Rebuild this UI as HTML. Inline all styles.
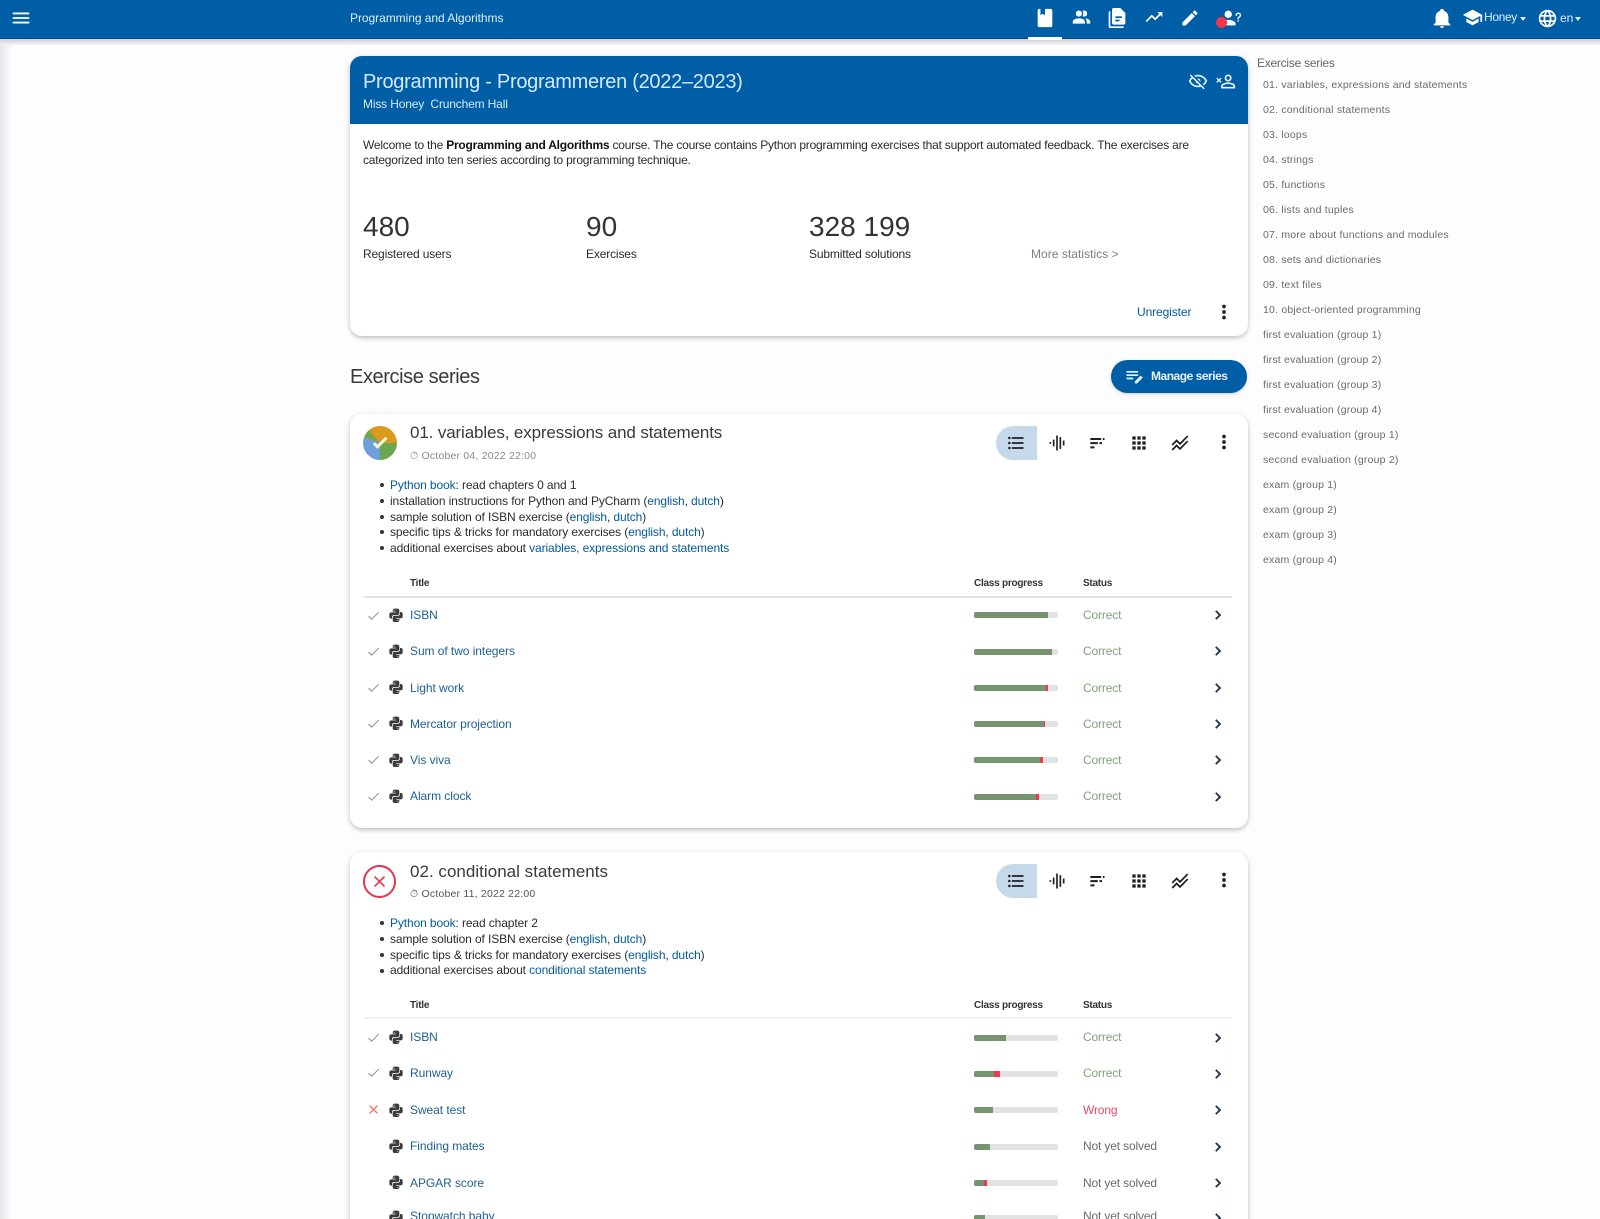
<!DOCTYPE html>
<html><head><meta charset="utf-8"><title>Programming and Algorithms</title>
<style>
*{box-sizing:border-box}
html,body{margin:0;padding:0;width:1600px;height:1219px;overflow:hidden}
body{background:#fdfcff;font-family:"Liberation Sans",sans-serif;color:#1c1b1f}
#w{position:relative;width:1600px;height:1219px;overflow:hidden;background:#fdfcff}
.t{position:absolute;white-space:nowrap;line-height:16px;font-size:12px}
.ic{position:absolute;fill:currentColor}
a{color:#005a9c;text-decoration:none}
.card{position:absolute;left:350px;width:898px;background:#fff;border-radius:12px;box-shadow:0 2px 4px rgba(0,0,0,.2),0 1px 8px rgba(0,0,0,.06)}
.bar{position:absolute;left:974px;width:84px;height:6px;margin-top:-1px;background:#e2e2e4;border-radius:2px;overflow:hidden}
.bar i{position:absolute;top:0;height:6px;display:block}
.g{background:#769470}.r{background:#ee3a50}
.hd{font-weight:bold;font-size:10px;color:#333;letter-spacing:-.25px}
.nm{color:#1d5f96;letter-spacing:-.06px}
.ok{color:#85a07e;letter-spacing:-.15px}.no{color:#e8495c;letter-spacing:-.15px}.ny{color:#6b6b70;letter-spacing:-.15px}
.sd{color:#6b6b70;font-size:10.5px;letter-spacing:.2px}
.li{color:#2b2b2f;letter-spacing:-.11px}
.st{color:#2b2b2f;letter-spacing:-.15px}
.bn{font-size:28px;line-height:34px;color:#333}
</style></head><body><div id="w">
<svg width="0" height="0" style="position:absolute"><defs>
<symbol id="py" viewBox="0 0 24 24"><path d="M19.14,7.5A2.86,2.86 0 0,1 22,10.36V14.14A2.86,2.86 0 0,1 19.14,17H12C12,17.39 12.32,17.96 12.71,17.96H17V19.64A2.86,2.86 0 0,1 14.14,22.5H9.86A2.86,2.86 0 0,1 7,19.64V15.89C7,14.31 8.28,13.04 9.86,13.04H15.11C16.69,13.04 17.96,11.76 17.96,10.18V7.5H19.14M14.86,19.29C14.46,19.29 14.14,19.59 14.14,20.18C14.14,20.77 14.46,20.89 14.86,20.89A0.71,0.71 0 0,0 15.57,20.18C15.57,19.59 15.25,19.29 14.86,19.29M4.86,17.5C3.28,17.5 2,16.22 2,14.64V10.86C2,9.28 3.28,8 4.86,8H12C12,7.61 11.68,7.04 11.29,7.04H7V5.36C7,3.78 8.28,2.5 9.86,2.5H14.14C15.72,2.5 17,3.78 17,5.36V9.11C17,10.69 15.72,11.96 14.14,11.96H8.89C7.31,11.96 6.04,13.24 6.04,14.82V17.5H4.86M9.14,5.71C9.54,5.71 9.86,5.41 9.86,4.82C9.86,4.23 9.54,4.11 9.14,4.11C8.75,4.11 8.43,4.23 8.43,4.82C8.43,5.41 8.75,5.71 9.14,5.71Z"/></symbol>
<symbol id="chev" viewBox="0 0 24 24"><path d="M8.2,16.6L12.8,12L8.2,7.400L10,5.600L16.400,12L10,18.400Z"/></symbol>
<symbol id="chk" viewBox="0 0 24 24"><path d="M21,7L9,19L3.5,13.5L4.6,12.4L9,16.8L19.9,5.9L21,7Z"/></symbol>
<symbol id="dots" viewBox="0 0 24 24"><path d="M12,16A2,2 0 0,1 14,18A2,2 0 0,1 12,20A2,2 0 0,1 10,18A2,2 0 0,1 12,16M12,10A2,2 0 0,1 14,12A2,2 0 0,1 12,14A2,2 0 0,1 10,12A2,2 0 0,1 12,10M12,4A2,2 0 0,1 14,6A2,2 0 0,1 12,8A2,2 0 0,1 10,6A2,2 0 0,1 12,4Z"/></symbol>
<symbol id="list" viewBox="0 0 24 24"><path d="M7,5H21V7H7V5M7,13V11H21V13H7M4,4.5A1.5,1.5 0 0,1 5.5,6A1.5,1.5 0 0,1 4,7.5A1.5,1.5 0 0,1 2.5,6A1.5,1.5 0 0,1 4,4.5M4,10.5A1.5,1.5 0 0,1 5.5,12A1.5,1.5 0 0,1 4,13.5A1.5,1.5 0 0,1 2.5,12A1.5,1.5 0 0,1 4,10.5M7,19V17H21V19H7M4,16.5A1.5,1.5 0 0,1 5.5,18A1.5,1.5 0 0,1 4,19.5A1.5,1.5 0 0,1 2.5,18A1.5,1.5 0 0,1 4,16.5Z"/></symbol>
<symbol id="wave" viewBox="0 0 24 24"><path d="M3 11h2v2H3zM7 8h2v8H7zM11 3h2v18h-2zM15 5h2v14h-2zM19 9h2v6h-2z"/></symbol>
<symbol id="sort" viewBox="0 0 24 24"><path d="M4 6h13v2.4H4zM19 6h2v2.4h-2zM4 11h9v2.4H4zM15 11h3v2.4h-3zM4 16h5v2.400H4z"/></symbol>
<symbol id="grid" viewBox="0 0 24 24"><path d="M4 4h4v4H4zM10 4h4v4h-4zM16 4h4v4h-4zM4 10h4v4H4zM10 10h4v4h-4zM16 10h4v4h-4zM4 16h4v4H4zM10 16h4v4h-4zM16 16h4v4h-4z"/></symbol>
<symbol id="multi" viewBox="0 0 24 24"><path d="M2 13.5l6-6 4 4L20.5 3 22 4.4 12 14.500l-4-4-4.600 4.600zM2 19.5l6-6 4 4L20.5 9 22 10.400 12 20.500l-4-4-4.600 4.600z"/></symbol>
</defs></svg>

<!-- page shading -->
<div style="position:absolute;left:0;top:39px;width:12px;height:1180px;background:linear-gradient(90deg,#e6e6ea,#fdfcff)"></div>
<div style="position:absolute;left:0;top:39px;width:1600px;height:6px;background:linear-gradient(#cfcfd3,#f3f3f6)"></div>

<!-- navbar -->
<div style="position:absolute;left:0;top:0;width:1600px;height:39px;background:#005ea6;color:#fff;border-bottom:1px solid #004f8c">
<svg class="ic" style="left:10px;top:7px" width="22" height="22" viewBox="0 0 24 24"><path d="M3,6H21V8H3V6M3,11H21V13H3V11M3,16H21V18H3V16Z"/></svg>
<span class="t" style="left:350px;top:10px;font-size:12px;color:#dbeeff;letter-spacing:-.05px">Programming and Algorithms</span>
<svg class="ic" style="left:1034px;top:7px" width="22" height="22" viewBox="0 0 24 24"><path d="M18,22A2,2 0 0,0 20,20V4C20,2.89 19.1,2 18,2H12V9L9.5,7.5L7,9V2H6A2,2 0 0,0 4,4V20A2,2 0 0,0 6,22H18Z"/></svg>
<svg class="ic" style="left:1071px;top:7px" width="21" height="21" viewBox="0 0 24 24"><path d="M16 17V19H2V17S2 13 9 13 16 17 16 17M12.5 7.5A3.5 3.5 0 1 0 9 11A3.5 3.5 0 0 0 12.5 7.5M15.94 13A5.32 5.32 0 0 1 18 17V19H22V17S22 13.37 15.94 13M15 4A3.39 3.39 0 0 0 13.07 4.59A5 5 0 0 1 13.07 10.41A3.39 3.39 0 0 0 15 11A3.5 3.5 0 0 0 15 4Z"/></svg>
<svg class="ic" style="left:1107px;top:8px" width="20" height="20" viewBox="0 0 24 24"><path fill-rule="evenodd" d="M16 0H8C6.9 0 6 .9 6 2V18C6 19.1 6.9 20 8 20H20C21.1 20 22 19.1 22 18V6L16 0M4 4V22H20V24H4C2.9 24 2 23.1 2 22V4H4M10 10V12H18V10H10M10 14V16H15V14H10Z"/></svg>
<svg class="ic" style="left:1144px;top:7px" width="20" height="20" viewBox="0 0 24 24"><path d="M16,6L18.29,8.29L13.41,13.17L9.41,9.17L2,16.59L3.41,18L9.41,12L13.41,16L19.71,9.71L22,12V6H16Z"/></svg>
<svg class="ic" style="left:1180px;top:8px" width="20" height="20" viewBox="0 0 24 24"><path d="M20.71,7.04C21.1,6.65 21.1,6 20.71,5.63L18.37,3.29C18,2.9 17.35,2.9 16.96,3.29L15.12,5.12L18.87,8.87M3,17.25V21H6.75L17.81,9.93L14.06,6.18L3,17.25Z"/></svg>
<svg class="ic" style="left:1220px;top:7px" width="22" height="22" viewBox="0 0 24 24"><path d="M13,8A4,4 0 0,1 9,12A4,4 0 0,1 5,8A4,4 0 0,1 9,4A4,4 0 0,1 13,8M17,18V20H1V18C1,15.79 4.58,14 9,14C13.42,14 17,15.79 17,18M20.5,14.5V16H19V14.5H20.5M18.5,9.5H17V9A3,3 0 0,1 20,6A3,3 0 0,1 23,9C23,9.97 22.5,10.88 21.71,11.41L21.41,11.6C20.84,12 20.5,12.61 20.5,13.25V13.5H19V13.25C19,12.11 19.59,11.05 20.5,10.36L20.9,10.1C21.3,9.9 21.5,9.5 21.5,9A1.5,1.5 0 0,0 20,7.5A1.5,1.5 0 0,0 18.5,9V9.5Z"/></svg>
<div style="position:absolute;left:1216px;top:17px;width:11px;height:11px;border-radius:50%;background:#f0344a"></div>
<div style="position:absolute;left:1028px;top:37px;width:34px;height:3px;background:#fff"></div>
<svg class="ic" style="left:1431px;top:7px" width="22" height="22" viewBox="0 0 24 24"><path d="M21,19V20H3V19L5,17V11C5,7.9 7.03,5.17 10,4.29C10,4.19 10,4.1 10,4A2,2 0 0,1 12,2A2,2 0 0,1 14,4C14,4.1 14,4.19 14,4.29C16.97,5.17 19,7.9 19,11V17L21,19M14,21A2,2 0 0,1 12,23A2,2 0 0,1 10,21"/></svg>
<svg class="ic" style="left:1462px;top:7px" width="21" height="21" viewBox="0 0 24 24"><path d="M12,3L1,9L12,15L21,10.09V17H23V9M5,13.18V17.18L12,21L19,17.18V13.18L12,17L5,13.18Z"/></svg>
<span class="t" style="left:1484px;top:9px;color:#dbeeff;letter-spacing:-.35px">Honey</span>
<div style="position:absolute;left:1520px;top:17px;border:3.5px solid transparent;border-top:4px solid #dbeeff;border-bottom:0"></div>
<svg class="ic" style="left:1537px;top:8px" width="21" height="21" viewBox="0 0 24 24"><path d="M16.36,14C16.44,13.34 16.5,12.68 16.5,12C16.5,11.32 16.44,10.66 16.36,10H19.74C19.9,10.64 20,11.31 20,12C20,12.69 19.9,13.36 19.74,14M14.59,19.56C15.19,18.45 15.65,17.25 15.97,16H18.92C17.96,17.65 16.43,18.93 14.59,19.56M14.34,14H9.66C9.56,13.34 9.5,12.68 9.5,12C9.5,11.32 9.56,10.65 9.66,10H14.34C14.43,10.65 14.5,11.32 14.5,12C14.5,12.68 14.43,13.34 14.34,14M12,19.96C11.17,18.76 10.5,17.43 10.09,16H13.91C13.5,17.43 12.83,18.76 12,19.96M8,8H5.08C6.03,6.34 7.57,5.06 9.4,4.44C8.8,5.55 8.35,6.75 8,8M5.08,16H8C8.35,17.25 8.8,18.45 9.4,19.56C7.57,18.93 6.03,17.65 5.08,16M4.26,14C4.1,13.36 4,12.69 4,12C4,11.31 4.1,10.64 4.26,10H7.64C7.56,10.66 7.5,11.32 7.5,12C7.5,12.68 7.56,13.34 7.64,14M12,4.03C12.83,5.23 13.5,6.57 13.91,8H10.09C10.5,6.57 11.17,5.23 12,4.03M18.92,8H15.97C15.65,6.75 15.19,5.55 14.59,4.44C16.43,5.07 17.96,6.34 18.92,8M12,2C6.47,2 2,6.5 2,12A10,10 0 0,0 12,22A10,10 0 0,0 22,12A10,10 0 0,0 12,2Z"/></svg>
<span class="t" style="left:1560px;top:10px;color:#dbeeff">en</span>
<div style="position:absolute;left:1575px;top:17px;border:3.5px solid transparent;border-top:4px solid #dbeeff;border-bottom:0"></div>
</div>

<!-- course card -->
<div class="card" style="top:56px;height:280px"></div>
<div style="position:absolute;left:350px;top:56px;width:898px;height:68px;background:#005ea6;border-radius:12px 12px 0 0"></div>
<span class="t" style="left:363px;top:69px;font-size:20px;line-height:26px;color:#d5eaff;letter-spacing:-.28px">Programming - Programmeren (2022–2023)</span>
<span class="t" style="left:363px;top:96px;color:#d5eaff;letter-spacing:-.16px">Miss Honey &nbsp;Crunchem Hall</span>
<svg class="ic" style="left:1188px;top:71px;color:#eaf4ff" width="20" height="20" viewBox="0 0 24 24"><path d="M2,5.27L3.28,4L20,20.72L18.73,22L15.65,18.92C14.5,19.3 13.28,19.5 12,19.5C7,19.5 2.73,16.39 1,12C1.69,10.24 2.79,8.69 4.19,7.46L2,5.27M12,9A3,3 0 0,1 15,12C15,12.35 14.94,12.69 14.83,13L11,9.17C11.31,9.06 11.65,9 12,9M12,4.5C17,4.5 21.27,7.61 23,12C22.18,14.08 20.79,15.88 19,17.19L17.58,15.76C18.94,14.82 20.06,13.54 20.82,12C19.17,8.64 15.76,6.5 12,6.5C10.91,6.5 9.84,6.68 8.84,7L7.3,5.47C8.74,4.85 10.33,4.5 12,4.5M3.18,12C4.83,15.36 8.24,17.5 12,17.5C12.69,17.5 13.37,17.43 14,17.29L11.72,15C10.29,14.85 9.15,13.71 9,12.28L5.6,8.87C4.61,9.72 3.78,10.78 3.18,12Z"/></svg>
<svg class="ic" style="left:1215px;top:71px;color:#eaf4ff" width="21" height="21" viewBox="0 0 24 24"><path d="M15 4A4 4 0 0 0 11 8A4 4 0 0 0 15 12A4 4 0 0 0 19 8A4 4 0 0 0 15 4M15 5.9A2.1 2.1 0 0 1 17.1 8A2.1 2.1 0 0 1 15 10.1A2.1 2.1 0 0 1 12.9 8A2.1 2.1 0 0 1 15 5.9M15 13C12.33 13 7 14.33 7 17V20H23V17C23 14.33 17.67 13 15 13M15 14.9C17.97 14.9 21.1 16.36 21.1 17V18.1H8.9V17C8.9 16.36 12 14.9 15 14.9M2.6 7.5L1.5 8.6L3.4 10.5L1.5 12.4L2.6 13.5L4.5 11.6L6.4 13.5L7.5 12.4L5.6 10.5L7.5 8.6L6.4 7.5L4.5 9.4Z"/></svg>
<div class="t" style="left:363px;top:137px;color:#2b2b2f;letter-spacing:-.22px">Welcome to the <b style="color:#111">Programming and Algorithms</b> course. The course contains Python programming exercises that support automated feedback. The exercises are</div>
<div class="t" style="left:363px;top:152px;color:#2b2b2f;letter-spacing:-.22px">categorized into ten series according to programming technique.</div>
<span class="t bn" style="left:363px;top:210px">480</span>
<span class="t bn" style="left:586px;top:210px">90</span>
<span class="t bn" style="left:809px;top:210px">328 199</span>
<span class="t st" style="left:363px;top:246px">Registered users</span>
<span class="t st" style="left:586px;top:246px">Exercises</span>
<span class="t st" style="left:809px;top:246px">Submitted solutions</span>
<span class="t" style="left:1031px;top:246px;color:#7c7c80;letter-spacing:.04px">More statistics &gt;</span>
<a class="t" style="left:1137px;top:304px;letter-spacing:-.1px">Unregister</a>
<svg class="ic" style="left:1213px;top:301px;color:#222" width="22" height="22"><use href="#dots"/></svg>

<span class="t" style="left:350px;top:364px;font-size:20px;line-height:26px;color:#3a3a3e;letter-spacing:-.4px">Exercise series</span>
<div style="position:absolute;left:1111px;top:360px;width:136px;height:33px;border-radius:17px;background:#005ea6;box-shadow:0 1px 3px rgba(0,0,0,.2)"></div>
<svg class="ic" style="left:1124px;top:366px;color:#e6f2ff" width="20" height="20" viewBox="0 0 24 24"><path d="M3 6h14v2H3zM3 10h14v2H3zM3 14h8v2H3zM13 18.5V21h2.5l7-7L20 11.500z"/></svg>
<span class="t" style="left:1151px;top:368px;color:#e6f2ff;font-weight:bold;letter-spacing:-.48px">Manage series</span>

<!-- sidebar -->
<span class="t" style="left:1257px;top:55px;color:#666;letter-spacing:-.25px">Exercise series</span>
<span class="t sd" style="left:1263px;top:77px">01. variables, expressions and statements</span>
<span class="t sd" style="left:1263px;top:102px">02. conditional statements</span>
<span class="t sd" style="left:1263px;top:127px">03. loops</span>
<span class="t sd" style="left:1263px;top:152px">04. strings</span>
<span class="t sd" style="left:1263px;top:177px">05. functions</span>
<span class="t sd" style="left:1263px;top:202px">06. lists and tuples</span>
<span class="t sd" style="left:1263px;top:227px">07. more about functions and modules</span>
<span class="t sd" style="left:1263px;top:252px">08. sets and dictionaries</span>
<span class="t sd" style="left:1263px;top:277px">09. text files</span>
<span class="t sd" style="left:1263px;top:302px">10. object-oriented programming</span>
<span class="t sd" style="left:1263px;top:327px">first evaluation (group 1)</span>
<span class="t sd" style="left:1263px;top:352px">first evaluation (group 2)</span>
<span class="t sd" style="left:1263px;top:377px">first evaluation (group 3)</span>
<span class="t sd" style="left:1263px;top:402px">first evaluation (group 4)</span>
<span class="t sd" style="left:1263px;top:427px">second evaluation (group 1)</span>
<span class="t sd" style="left:1263px;top:452px">second evaluation (group 2)</span>
<span class="t sd" style="left:1263px;top:477px">exam (group 1)</span>
<span class="t sd" style="left:1263px;top:502px">exam (group 2)</span>
<span class="t sd" style="left:1263px;top:527px">exam (group 3)</span>
<span class="t sd" style="left:1263px;top:552px">exam (group 4)</span>

<!-- series 1 -->
<div class="card" style="top:414px;height:414px"></div>
<div style="position:absolute;left:363px;top:426px;width:34px;height:34px;border-radius:50%;background:conic-gradient(#d99a1e 0 90deg,#6aa84f 90deg 180deg,#6f9fd8 180deg 290deg,#7aa54a 290deg 320deg,#d99a1e 320deg)"></div>
<svg class="ic" style="left:370px;top:433px;color:#f4f7d8" width="20" height="20"  viewBox="0 0 24 24"><path d="M21,7L9,19L3.500,13.500L6,11L9,14L18.500,4.500Z"/></svg>
<span class="t" style="left:410px;top:421px;font-size:17px;line-height:24px;color:#3a3a3e;letter-spacing:-.13px">01. variables, expressions and statements</span>
<span class="t" style="left:410px;top:448px;font-size:10.5px;color:#8a8a8e;letter-spacing:.2px">⏱ October 04, 2022 22:00</span>
<div style="position:absolute;left:996px;top:426px;width:41px;height:34px;background:#c6d9ea;border-radius:17px 0 0 17px"></div>
<svg class="ic" style="left:1006px;top:433px;color:#1f1f23" width="20" height="20"><use href="#list"/></svg>
<svg class="ic" style="left:1047px;top:433px;color:#1f1f23" width="20" height="20"><use href="#wave"/></svg>
<svg class="ic" style="left:1087px;top:433px;color:#1f1f23" width="20" height="20"><use href="#sort"/></svg>
<svg class="ic" style="left:1129px;top:433px;color:#1f1f23" width="20" height="20"><use href="#grid"/></svg>
<svg class="ic" style="left:1170px;top:433px;color:#1f1f23" width="20" height="20"><use href="#multi"/></svg>
<svg class="ic" style="left:1213px;top:431px;color:#1f1f23" width="22" height="22"><use href="#dots"/></svg>
<i style="position:absolute;left:380px;top:483px;width:4px;height:4px;border-radius:50%;background:#333"></i>
<i style="position:absolute;left:380px;top:499px;width:4px;height:4px;border-radius:50%;background:#333"></i>
<i style="position:absolute;left:380px;top:515px;width:4px;height:4px;border-radius:50%;background:#333"></i>
<i style="position:absolute;left:380px;top:530px;width:4px;height:4px;border-radius:50%;background:#333"></i>
<i style="position:absolute;left:380px;top:546px;width:4px;height:4px;border-radius:50%;background:#333"></i>
<span class="t li" style="left:390px;top:477px"><a>Python book</a>: read chapters 0 and 1</span>
<span class="t li" style="left:390px;top:493px">installation instructions for Python and PyCharm (<a>english</a>, <a>dutch</a>)</span>
<span class="t li" style="left:390px;top:509px">sample solution of ISBN exercise (<a>english</a>, <a>dutch</a>)</span>
<span class="t li" style="left:390px;top:524px">specific tips &amp; tricks for mandatory exercises (<a>english</a>, <a>dutch</a>)</span>
<span class="t li" style="left:390px;top:540px">additional exercises about <a>variables, expressions and statements</a></span>
<span class="t hd" style="left:410px;top:576px">Title</span><span class="t hd" style="left:974px;top:576px">Class progress</span><span class="t hd" style="left:1083px;top:576px">Status</span>
<div style="position:absolute;left:364px;top:596px;width:868px;height:2px;background:#e4e4e6"></div>

<svg class="ic" style="left:366px;top:608px;color:#8a8a8e" width="15" height="15"><use href="#chk"/></svg><svg class="ic" style="left:388px;top:607px;color:#3c3c40" width="16" height="16"><use href="#py"/></svg><span class="t nm" style="left:410px;top:607px">ISBN</span><div class="bar" style="top:613px"><i class="g" style="left:0;width:74px"></i></div><span class="t ok" style="left:1083px;top:607px">Correct</span><svg class="ic" style="left:1209px;top:606px;color:#26384a" width="18" height="18"><use href="#chev"/></svg>
<svg class="ic" style="left:366px;top:644px;color:#8a8a8e" width="15" height="15"><use href="#chk"/></svg><svg class="ic" style="left:388px;top:643px;color:#3c3c40" width="16" height="16"><use href="#py"/></svg><span class="t nm" style="left:410px;top:643px">Sum of two integers</span><div class="bar" style="top:650px"><i class="g" style="left:0;width:78px"></i></div><span class="t ok" style="left:1083px;top:643px">Correct</span><svg class="ic" style="left:1209px;top:642px;color:#26384a" width="18" height="18"><use href="#chev"/></svg>
<svg class="ic" style="left:366px;top:680px;color:#8a8a8e" width="15" height="15"><use href="#chk"/></svg><svg class="ic" style="left:388px;top:679px;color:#3c3c40" width="16" height="16"><use href="#py"/></svg><span class="t nm" style="left:410px;top:680px">Light work</span><div class="bar" style="top:686px"><i class="g" style="left:0;width:72px"></i><i class="r" style="left:72px;width:2px"></i></div><span class="t ok" style="left:1083px;top:680px">Correct</span><svg class="ic" style="left:1209px;top:679px;color:#26384a" width="18" height="18"><use href="#chev"/></svg>
<svg class="ic" style="left:366px;top:716px;color:#8a8a8e" width="15" height="15"><use href="#chk"/></svg><svg class="ic" style="left:388px;top:715px;color:#3c3c40" width="16" height="16"><use href="#py"/></svg><span class="t nm" style="left:410px;top:716px">Mercator projection</span><div class="bar" style="top:722px"><i class="g" style="left:0;width:70px"></i><i class="r" style="left:70px;width:1px"></i></div><span class="t ok" style="left:1083px;top:716px">Correct</span><svg class="ic" style="left:1209px;top:715px;color:#26384a" width="18" height="18"><use href="#chev"/></svg>
<svg class="ic" style="left:366px;top:752px;color:#8a8a8e" width="15" height="15"><use href="#chk"/></svg><svg class="ic" style="left:388px;top:752px;color:#3c3c40" width="16" height="16"><use href="#py"/></svg><span class="t nm" style="left:410px;top:752px">Vis viva</span><div class="bar" style="top:758px"><i class="g" style="left:0;width:66px"></i><i class="r" style="left:66px;width:3px"></i></div><span class="t ok" style="left:1083px;top:752px">Correct</span><svg class="ic" style="left:1209px;top:751px;color:#26384a" width="18" height="18"><use href="#chev"/></svg>
<svg class="ic" style="left:366px;top:789px;color:#8a8a8e" width="15" height="15"><use href="#chk"/></svg><svg class="ic" style="left:388px;top:788px;color:#3c3c40" width="16" height="16"><use href="#py"/></svg><span class="t nm" style="left:410px;top:788px">Alarm clock</span><div class="bar" style="top:795px"><i class="g" style="left:0;width:62px"></i><i class="r" style="left:62px;width:3px"></i></div><span class="t ok" style="left:1083px;top:788px">Correct</span><svg class="ic" style="left:1209px;top:788px;color:#26384a" width="18" height="18"><use href="#chev"/></svg>

<!-- series 2 -->
<div class="card" style="top:852px;height:420px"></div>
<div style="position:absolute;left:363px;top:865px;width:33px;height:33px;border-radius:50%;border:2px solid #e8344a"></div>
<svg class="ic" style="left:370px;top:872px;color:#e8344a" width="19" height="19" viewBox="0 0 24 24"><path d="M19,6.410L17.590,5L12,10.590L6.410,5L5,6.410L10.590,12L5,17.590L6.410,19L12,13.410L17.590,19L19,17.590L13.410,12Z"/></svg>
<span class="t" style="left:410px;top:860px;font-size:17px;line-height:24px;color:#3a3a3e;letter-spacing:.02px">02. conditional statements</span>
<span class="t" style="left:410px;top:886px;font-size:10.5px;color:#55555a;letter-spacing:.2px">⏱ October 11, 2022 22:00</span>
<div style="position:absolute;left:996px;top:864px;width:41px;height:34px;background:#c6d9ea;border-radius:17px 0 0 17px"></div>
<svg class="ic" style="left:1006px;top:871px;color:#1f1f23" width="20" height="20"><use href="#list"/></svg>
<svg class="ic" style="left:1047px;top:871px;color:#1f1f23" width="20" height="20"><use href="#wave"/></svg>
<svg class="ic" style="left:1087px;top:871px;color:#1f1f23" width="20" height="20"><use href="#sort"/></svg>
<svg class="ic" style="left:1129px;top:871px;color:#1f1f23" width="20" height="20"><use href="#grid"/></svg>
<svg class="ic" style="left:1170px;top:871px;color:#1f1f23" width="20" height="20"><use href="#multi"/></svg>
<svg class="ic" style="left:1213px;top:869px;color:#1f1f23" width="22" height="22"><use href="#dots"/></svg>
<i style="position:absolute;left:380px;top:921px;width:4px;height:4px;border-radius:50%;background:#333"></i>
<i style="position:absolute;left:380px;top:937px;width:4px;height:4px;border-radius:50%;background:#333"></i>
<i style="position:absolute;left:380px;top:953px;width:4px;height:4px;border-radius:50%;background:#333"></i>
<i style="position:absolute;left:380px;top:969px;width:4px;height:4px;border-radius:50%;background:#333"></i>
<span class="t li" style="left:390px;top:915px"><a>Python book</a>: read chapter 2</span>
<span class="t li" style="left:390px;top:931px">sample solution of ISBN exercise (<a>english</a>, <a>dutch</a>)</span>
<span class="t li" style="left:390px;top:947px">specific tips &amp; tricks for mandatory exercises (<a>english</a>, <a>dutch</a>)</span>
<span class="t li" style="left:390px;top:962px">additional exercises about <a>conditional statements</a></span>
<span class="t hd" style="left:410px;top:998px">Title</span><span class="t hd" style="left:974px;top:998px">Class progress</span><span class="t hd" style="left:1083px;top:998px">Status</span>
<div style="position:absolute;left:364px;top:1017px;width:868px;height:2px;background:#f0f0f2"></div>

<svg class="ic" style="left:366px;top:1030px;color:#8a8a8e" width="15" height="15"><use href="#chk"/></svg><svg class="ic" style="left:388px;top:1029px;color:#3c3c40" width="16" height="16"><use href="#py"/></svg><span class="t nm" style="left:410px;top:1029px">ISBN</span><div class="bar" style="top:1036px"><i class="g" style="left:0;width:32px"></i></div><span class="t ok" style="left:1083px;top:1029px">Correct</span><svg class="ic" style="left:1209px;top:1029px;color:#26384a" width="18" height="18"><use href="#chev"/></svg>
<svg class="ic" style="left:366px;top:1065px;color:#8a8a8e" width="15" height="15"><use href="#chk"/></svg><svg class="ic" style="left:388px;top:1065px;color:#3c3c40" width="16" height="16"><use href="#py"/></svg><span class="t nm" style="left:410px;top:1065px">Runway</span><div class="bar" style="top:1072px"><i class="g" style="left:0;width:20px"></i><i class="r" style="left:20px;width:6px"></i></div><span class="t ok" style="left:1083px;top:1065px">Correct</span><svg class="ic" style="left:1209px;top:1065px;color:#26384a" width="18" height="18"><use href="#chev"/></svg>
<svg class="ic" style="left:366px;top:1102px;color:#e8735a" width="15" height="15" viewBox="0 0 24 24"><path d="M19,6.410L17.590,5L12,10.590L6.410,5L5,6.410L10.590,12L5,17.590L6.410,19L12,13.410L17.590,19L19,17.590L13.410,12Z"/></svg><svg class="ic" style="left:388px;top:1102px;color:#3c3c40" width="16" height="16"><use href="#py"/></svg><span class="t nm" style="left:410px;top:1102px">Sweat test</span><div class="bar" style="top:1108px"><i class="g" style="left:0;width:19px"></i></div><span class="t no" style="left:1083px;top:1102px">Wrong</span><svg class="ic" style="left:1209px;top:1101px;color:#26384a" width="18" height="18"><use href="#chev"/></svg>
<svg class="ic" style="left:388px;top:1138px;color:#3c3c40" width="16" height="16"><use href="#py"/></svg><span class="t nm" style="left:410px;top:1138px">Finding mates</span><div class="bar" style="top:1145px"><i class="g" style="left:0;width:16px"></i></div><span class="t ny" style="left:1083px;top:1138px">Not yet solved</span><svg class="ic" style="left:1209px;top:1138px;color:#26384a" width="18" height="18"><use href="#chev"/></svg>
<svg class="ic" style="left:388px;top:1174px;color:#3c3c40" width="16" height="16"><use href="#py"/></svg><span class="t nm" style="left:410px;top:1175px">APGAR score</span><div class="bar" style="top:1181px"><i class="g" style="left:0;width:10px"></i><i class="r" style="left:10px;width:3px"></i></div><span class="t ny" style="left:1083px;top:1175px">Not yet solved</span><svg class="ic" style="left:1209px;top:1174px;color:#26384a" width="18" height="18"><use href="#chev"/></svg>
<svg class="ic" style="left:388px;top:1209px;color:#3c3c40" width="16" height="16"><use href="#py"/></svg><span class="t nm" style="left:410px;top:1208px">Stopwatch baby</span><div class="bar" style="top:1216px"><i class="g" style="left:0;width:11px"></i></div><span class="t ny" style="left:1083px;top:1208px">Not yet solved</span><svg class="ic" style="left:1209px;top:1209px;color:#26384a" width="18" height="18"><use href="#chev"/></svg>
</div></body></html>
